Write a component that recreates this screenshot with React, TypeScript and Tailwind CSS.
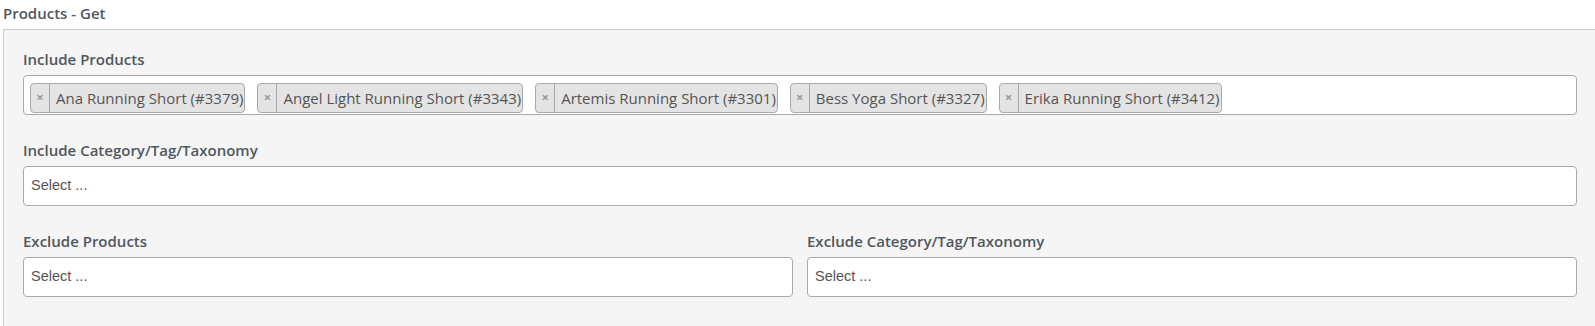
import React from 'react';

const tags = [
  'Ana Running Short (#3379)',
  'Angel Light Running Short (#3343)',
  'Artemis Running Short (#3301)',
  'Bess Yoga Short (#3327)',
  'Erika Running Short (#3412)',
];

function Label({ children }: { children: React.ReactNode }) {
  return (
    <div className="mb-[6px] text-[15px] leading-5 font-semibold text-[#50575e]">{children}</div>
  );
}

function SelectBox() {
  return (
    <div className="flex h-10 items-center rounded border border-[#aaa] bg-white px-[7px]">
      <span className="font-['Liberation_Sans',Arial,sans-serif] text-[14.5px] text-[#555]">Select ...</span>
    </div>
  );
}

export default function App() {
  return (
    <div className="h-[326px] w-[1595px] overflow-hidden bg-white font-['Open_Sans',sans-serif]">
      {/* Section title */}
      <div className="h-[29px] pl-[3px] pt-[3px] text-[15px] leading-5 font-semibold text-[#50575e]">
        Products - Get
      </div>

      {/* Panel */}
      <div className="ml-[3px] h-[297px] border-l border-t border-[#ccc] bg-[#f5f5f5] pl-[19px] pr-[18px] pt-[19px]">
        {/* Include products */}
        <Label>Include Products</Label>
        <div className="flex h-10 items-start gap-[12px] rounded border border-[#aaa] bg-white px-[6px] pt-[7px]">
          {tags.map((tag) => (
            <div
              key={tag}
              className="flex h-[30px] items-stretch rounded border border-[#aaa] bg-[#e4e4e4] text-[15px] text-[#555]"
            >
              <span className="flex w-[19px] items-center justify-center border-r border-[#aaa] text-[13px] font-bold text-[#999]">
                ×
              </span>
              <span className="flex items-center pl-[6px] pr-[1px] whitespace-nowrap">{tag}</span>
            </div>
          ))}
        </div>

        {/* Include taxonomy */}
        <div className="mt-[25px]">
          <Label>Include Category/Tag/Taxonomy</Label>
          <SelectBox />
        </div>

        {/* Exclude row */}
        <div className="mt-[25px] grid grid-cols-2 gap-[14px]">
          <div>
            <Label>Exclude Products</Label>
            <SelectBox />
          </div>
          <div>
            <Label>Exclude Category/Tag/Taxonomy</Label>
            <SelectBox />
          </div>
        </div>
      </div>
    </div>
  );
}
